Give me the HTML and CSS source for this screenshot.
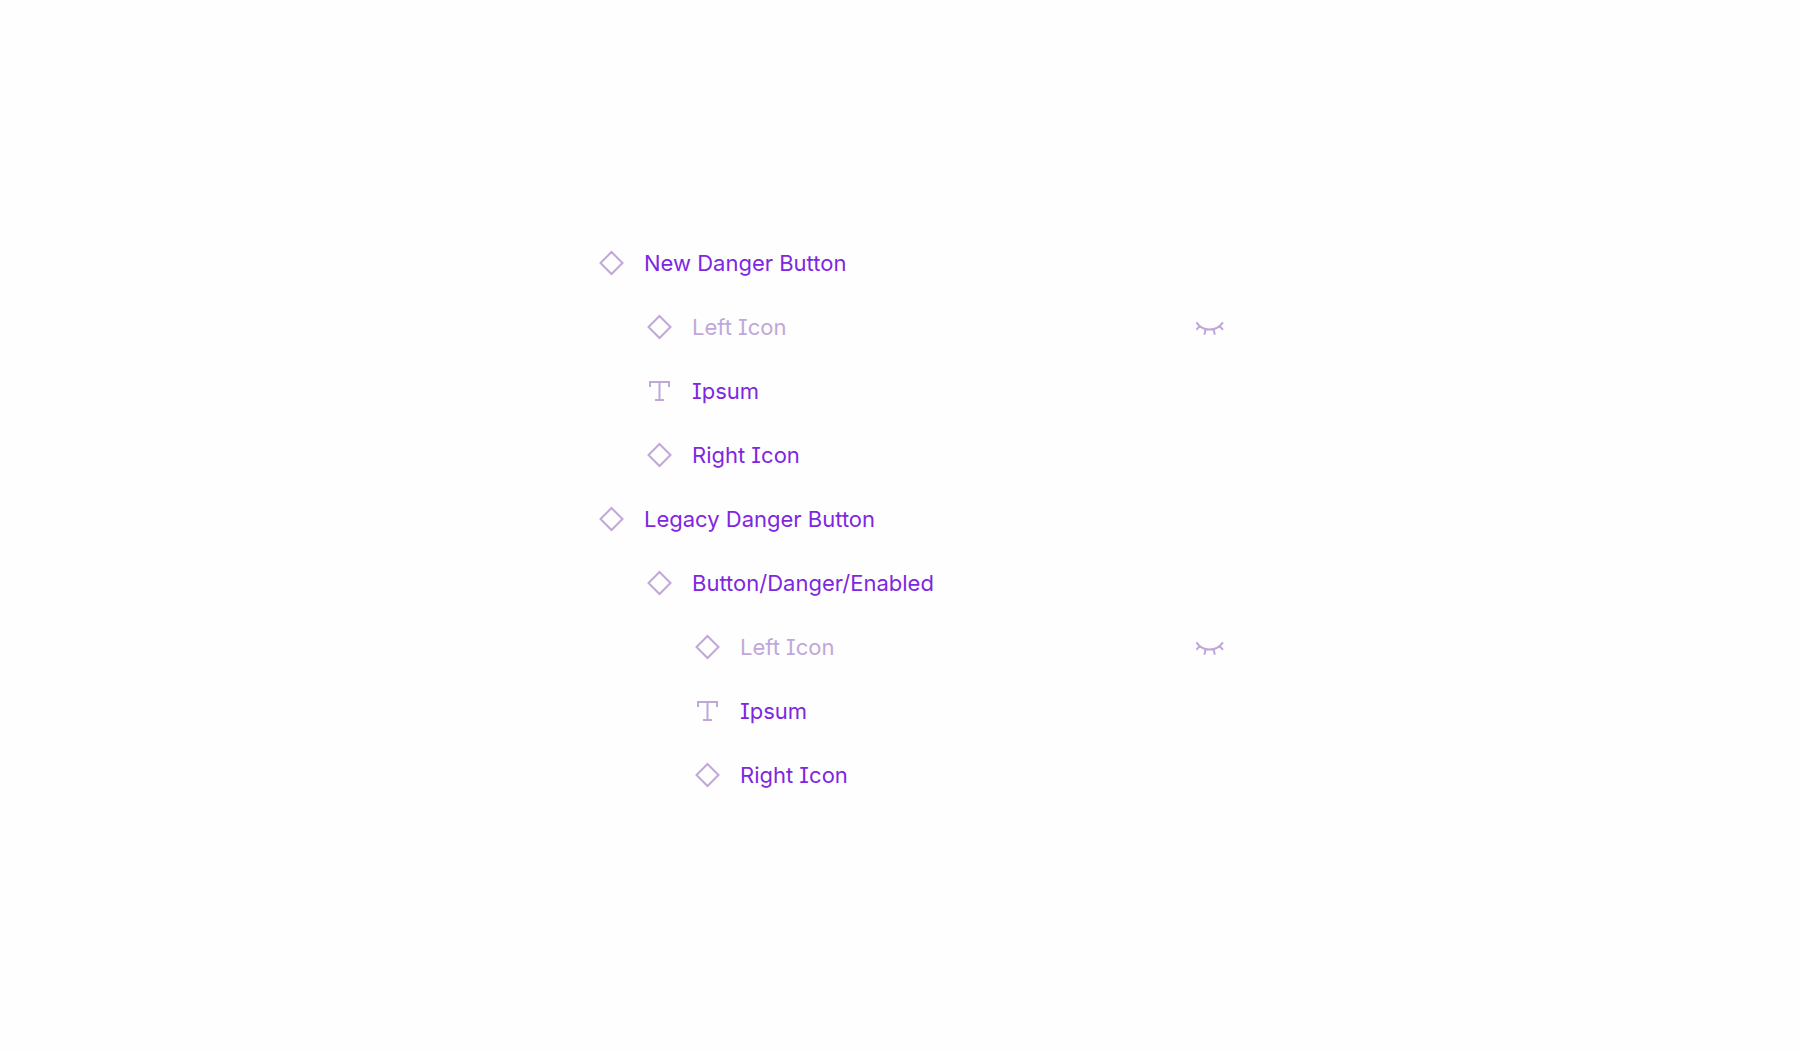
FILE: index.html
```html
<!DOCTYPE html>
<html lang="en">
<head>
<meta charset="utf-8">
<meta name="viewport" content="width=device-width, initial-scale=1">
<title>Layers</title>
<link rel="stylesheet" href="styles.css">
</head>
<body>
<svg class="sprite" aria-hidden="true">
  <symbol id="instance" viewBox="0 0 26 26"><path d="M13.5 2 24.5 13 13.5 24 2.5 13Z"/></symbol>
  <symbol id="text" viewBox="0 0 26 26"><path d="M4 9V4H23V9M13.5 4V22M9 22H18"/></symbol>
  <symbol id="hidden" viewBox="0 0 28 16"><path d="M.3 2.4Q5.5 9.6 13.6 9.6T27 2.4M3.8 6 .3 9.8M9.6 9 8.4 14.8M17.6 9 18.8 14.8M23.4 6 27 9.8"/></symbol>
</svg>
<main class="layers">
  <ul class="tree">
    <li>
      <div class="row"><svg class="icon"><use href="#instance"/></svg><span class="name">New Danger Button</span></div>
      <ul class="tree nested">
        <li class="row muted"><svg class="icon"><use href="#instance"/></svg><span class="name">Left Icon</span><button class="toggle" type="button" aria-label="Show Left Icon"><svg class="eye"><use href="#hidden"/></svg></button></li>
        <li class="row"><svg class="icon"><use href="#text"/></svg><span class="name">Ipsum</span></li>
        <li class="row"><svg class="icon"><use href="#instance"/></svg><span class="name">Right Icon</span></li>
      </ul>
    </li>
    <li>
      <div class="row"><svg class="icon"><use href="#instance"/></svg><span class="name">Legacy Danger Button</span></div>
      <ul class="tree nested">
        <li>
          <div class="row"><svg class="icon"><use href="#instance"/></svg><span class="name">Button/Danger/Enabled</span></div>
          <ul class="tree nested">
            <li class="row muted"><svg class="icon"><use href="#instance"/></svg><span class="name">Left Icon</span><button class="toggle" type="button" aria-label="Show Left Icon"><svg class="eye"><use href="#hidden"/></svg></button></li>
            <li class="row"><svg class="icon"><use href="#text"/></svg><span class="name">Ipsum</span></li>
            <li class="row"><svg class="icon"><use href="#instance"/></svg><span class="name">Right Icon</span></li>
          </ul>
        </li>
      </ul>
    </li>
  </ul>
</main>
</body>
</html>
```
FILE: styles.css
```css
:root {
  --purple: #7f27e0;
  --lilac: #bfa8d9;
}

* {
  box-sizing: border-box;
}

body {
  margin: 0;
  background: #fefefe;
  color: var(--purple);
  font: 400 22px/32px Inter, sans-serif;
  font-feature-settings: "cv08";
}

.sprite {
  position: absolute;
  width: 0;
  height: 0;
}

.layers {
  max-width: 649px;
  margin: 0 auto;
  padding: 231px 0 32px 23px;
}

.tree {
  margin: 0;
  padding: 0;
  list-style: none;
}

.nested {
  padding-left: 48px;
}

.row {
  display: flex;
  align-items: center;
  gap: 20px;
  height: 64px;
}

.muted {
  color: var(--lilac);
}

.name {
  flex: 1;
}

.icon,
.eye {
  display: block;
  flex: none;
  fill: none;
  stroke: var(--lilac);
  stroke-width: 2;
}

.icon {
  width: 26px;
  height: 26px;
}

.eye {
  width: 28px;
  height: 16px;
}

.toggle {
  padding: 2px 0 0;
  border: 0;
  background: none;
}
```
